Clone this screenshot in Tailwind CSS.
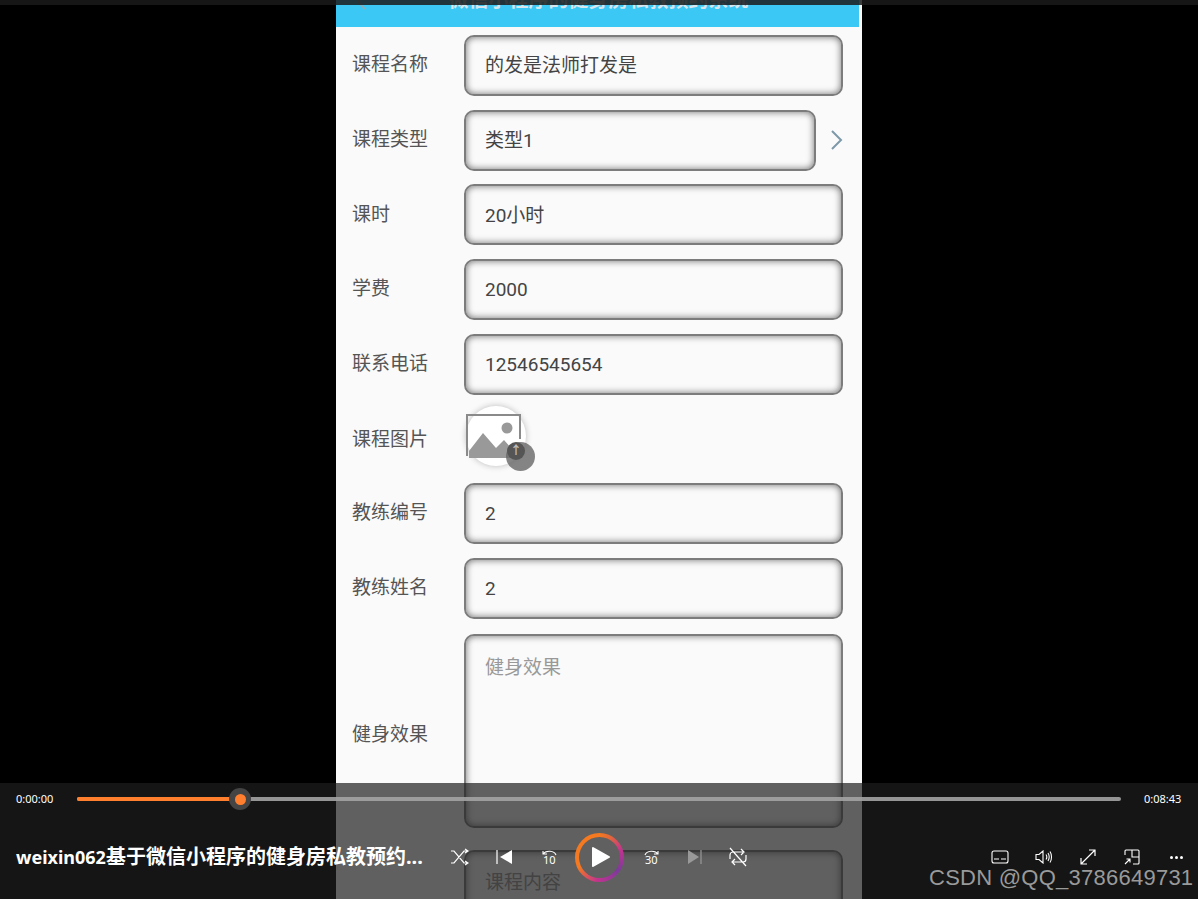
<!DOCTYPE html>
<html lang="zh">
<head>
  <meta charset="UTF-8">
  <title>weixin062</title>
  <script src="https://cdn.jsdelivr.net/npm/@tailwindcss/browser@4"></script>
</head>
<body class="bg-black w-[1198px] h-[899px] overflow-hidden relative font-['Roboto','Noto_Sans_CJK_SC',sans-serif]">

  <!-- top strip -->
  <div class="absolute top-0 left-0 w-full h-[5px] bg-[rgba(26,26,26,0.85)] z-10"></div>

  <!-- phone page -->
  <main class="w-[526px] h-[899px] ml-[336px] bg-[#fafafa] overflow-hidden text-[19px] text-[#555]">
    <header class="h-[27px] w-[523px] bg-[#3cc8f5] overflow-hidden relative">
      <svg class="absolute left-[20px] top-0" width="12" height="10" viewBox="0 0 12 10" fill="none" stroke="#9aa9ae" stroke-width="1.500"><path d="M6 -3L2 2l7 7"/></svg>
      <div class="mt-[-14px] pl-[2px] text-center text-[20px] leading-[28px] font-bold text-[#d5e6ee]">微信小程序的健身房私教预约系统</div>
    </header>

    <div class="pt-[8px] pl-[16px] pr-[19px] flex flex-col gap-[13.7px]">
      <div class="flex items-center h-[61px]">
        <label class="w-[112px]">课程名称</label>
        <div class="flex-1 h-full rounded-[10px] border-2 border-[#7c7c7c] shadow-[inset_0_0_7px_#6e6e6e] pl-[19px] pt-[2px] flex items-center text-[#444]">的发是法师打发是</div>
      </div>
      <div class="flex items-center h-[61px]">
        <label class="w-[112px]">课程类型</label>
        <div class="w-[352px] h-full rounded-[10px] border-2 border-[#7c7c7c] shadow-[inset_0_0_7px_#6e6e6e] pl-[19px] pt-[2px] flex items-center text-[#444]">类型1</div>
        <svg class="ml-[14px]" width="13" height="20" viewBox="0 0 13 20" fill="none" stroke="#7d98a8" stroke-width="2"><path d="M2 1l9 9-9 9"/></svg>
      </div>
      <div class="flex items-center h-[61px]">
        <label class="w-[112px]">课时</label>
        <div class="flex-1 h-full rounded-[10px] border-2 border-[#7c7c7c] shadow-[inset_0_0_7px_#6e6e6e] pl-[19px] pt-[2px] flex items-center text-[#444]">20小时</div>
      </div>
      <div class="flex items-center h-[61px]">
        <label class="w-[112px]">学费</label>
        <div class="flex-1 h-full rounded-[10px] border-2 border-[#7c7c7c] shadow-[inset_0_0_7px_#6e6e6e] pl-[19px] pt-[2px] flex items-center text-[#444]">2000</div>
      </div>
      <div class="flex items-center h-[61px]">
        <label class="w-[112px]">联系电话</label>
        <div class="flex-1 h-full rounded-[10px] border-2 border-[#7c7c7c] shadow-[inset_0_0_7px_#6e6e6e] pl-[19px] pt-[2px] flex items-center text-[#444]">12546545654</div>
      </div>
      <div class="flex items-center h-[60px] -mt-[2px]">
        <label class="w-[114px] mt-[8px]">课程图片</label>
        <div class="relative w-[60px] h-[60px] rounded-full bg-white shadow-[0_0_6px_#bbb]">
          <svg class="absolute left-0 top-[6px]" width="56" height="46" viewBox="0 0 56 46">
            <path d="M1 44V3h53v24" fill="none" stroke="#8a8a8a" stroke-width="2"/>
            <circle cx="41" cy="16" r="5.500" fill="#999"/>
            <path d="M3 46v-7l14-18 13 15 8-8 16 18z" fill="#999"/>
          </svg>
          <div class="absolute left-[40px] top-[36px] w-[29px] h-[29px] rounded-full bg-[#666]/80 flex items-center justify-center">
            <div class="w-[18px] h-[18px] -ml-[9px] -mt-[11px] rounded-full bg-[#555] text-[12px] leading-[18px] text-center font-bold text-[#bbb]">↑</div>
          </div>
        </div>
      </div>
      <div class="flex items-center h-[61px] mt-[3px]">
        <label class="w-[112px]">教练编号</label>
        <div class="flex-1 h-full rounded-[10px] border-2 border-[#7c7c7c] shadow-[inset_0_0_7px_#6e6e6e] pl-[19px] pt-[2px] flex items-center text-[#444]">2</div>
      </div>
      <div class="flex items-center h-[61px]">
        <label class="w-[112px]">教练姓名</label>
        <div class="flex-1 h-full rounded-[10px] border-2 border-[#7c7c7c] shadow-[inset_0_0_7px_#6e6e6e] pl-[19px] pt-[2px] flex items-center text-[#444]">2</div>
      </div>
      <div class="flex items-center h-[194px] mt-[1px]">
        <label class="w-[112px] mt-[10px]">健身效果</label>
        <div class="flex-1 h-full rounded-[10px] border-2 border-[#7c7c7c] shadow-[inset_0_0_7px_#6e6e6e] pl-[19px] pt-[18px] text-[#999]">健身效果</div>
      </div>
      <div class="flex h-[100px] mt-[9px]">
        <div class="w-[112px]"></div>
        <div class="flex-1 h-full rounded-[10px] border-2 border-[#7c7c7c] shadow-[inset_0_0_7px_#6e6e6e] pl-[19px] pt-[17px] text-[#999]">课程内容</div>
      </div>
    </div>
  </main>

  <!-- player overlay -->
  <section class="absolute left-0 bottom-0 w-full h-[116px] bg-[rgba(30,30,30,0.7)] text-white font-['Noto_Sans','Noto_Sans_CJK_SC',sans-serif]">
    <div class="flex items-center h-[32px] pl-[16px]">
      <span class="w-[61px] text-[11px]">0:00:00</span>
      <div class="w-[1044px] h-[4px] rounded-full bg-[#a3a3a3]/90 relative">
        <div class="h-full w-[163px] rounded-full bg-[#ff7f2f]"></div>
        <div class="absolute left-[152px] top-[-9px] w-[22px] h-[22px] rounded-full bg-[#444] flex items-center justify-center">
          <div class="w-[11px] h-[11px] rounded-full bg-[#ff7f2f]"></div>
        </div>
      </div>
      <span class="ml-[23px] text-[11px]">0:08:43</span>
    </div>

    <div class="flex items-center h-[84px] pl-[16px] relative">
      <div class="text-[20px] font-bold whitespace-nowrap"><span class="text-[18px]">weixin062</span>基于微信小程序的健身房私教预约<span class="text-[20px]">...</span></div>

      <!-- transport controls -->
      <div class="absolute left-[451px] top-[16px] flex items-center h-[52px]">
        <svg width="18" height="18" viewBox="0 0 18 18" fill="none" stroke="#fff" stroke-width="1.200"><path d="M0 3h3l10 12h4M0 15h3l10-12h4M14 1l3 2-3 2M14 13l3 2-3 2"/></svg>
        <svg class="ml-[27px]" width="17" height="16" viewBox="0 0 17 16"><path d="M1 1v14" stroke="#fff" stroke-width="1.200"/><path d="M16 1v14L4 8z" fill="#fff"/></svg>
        <svg class="ml-[27px]" width="18" height="22" viewBox="0 0 18 22" fill="none" stroke="#fff" stroke-width="1.100"><path d="M3 8a7 5 0 0 1 13 1M3 5v3h4"/><text x="3" y="18" font-size="11" fill="#fff" stroke="none" font-family="Noto Sans">10</text></svg>
        <div class="ml-[17px] w-[49px] h-[49px] rounded-full bg-[conic-gradient(#f47920_0deg,#e0653c_30deg,#c2338f_70deg,#7c3a9c_125deg,#c2338f_185deg,#f47920_245deg,#f47920_360deg)] flex items-center justify-center">
          <div class="w-[41px] h-[41px] rounded-full bg-[#606060] flex items-center justify-center">
            <svg class="ml-[2px]" width="20" height="22" viewBox="0 0 20 22"><path d="M2 2l16 9-16 9z" fill="#fff" stroke="#fff" stroke-width="2" stroke-linejoin="round"/></svg>
          </div>
        </div>
        <svg class="ml-[19px]" width="18" height="22" viewBox="0 0 18 22" fill="none" stroke="#fff" stroke-width="1.100"><path d="M15 8a7 5 0 0 0-13 1M15 5v3h-4"/><text x="2" y="18" font-size="11" fill="#fff" stroke="none" font-family="Noto Sans">30</text></svg>
        <svg class="ml-[26px]" width="15" height="16" viewBox="0 0 15 16"><path d="M14 1v14" stroke="#999" stroke-width="1.200"/><path d="M1 1v14l11-7z" fill="#999"/></svg>
        <svg class="ml-[27px]" width="18" height="20" viewBox="0 0 18 20" fill="none" stroke="#fff" stroke-width="1.200"><path d="M1 12V8a3 3 0 0 1 3-3h10M12 2l3 3-3 3M17 8v4a3 3 0 0 1-3 3H4M6 12l-3 3 3 3M1 1l16 18"/></svg>
      </div>

      <!-- right controls -->
      <div class="absolute left-[991px] top-[32px] flex items-center h-[20px]">
        <svg width="18" height="14" viewBox="0 0 18 14" fill="none" stroke="#fff" stroke-width="1.100"><rect x="1" y="1" width="16" height="12" rx="2"/><path d="M3 9h5M10 9h5"/></svg>
        <svg class="ml-[26px]" width="18" height="14" viewBox="0 0 18 14" fill="none" stroke="#fff" stroke-width="1.100"><path d="M1 4.500h3L8 1v12L4 9.500H1zM11 4.500c1 1.500 1 3.500 0 5M13 3c1.500 2.500 1.500 5.500 0 8M15 1.500c2 3 2 8 0 11"/></svg>
        <svg class="ml-[27px]" width="16" height="16" viewBox="0 0 16 16" fill="none" stroke="#fff" stroke-width="1.200"><path d="M1 15L15 1M9 1h6v6M1 9v6h6"/></svg>
        <svg class="ml-[28px]" width="16" height="16" viewBox="0 0 16 16" fill="none" stroke="#fff" stroke-width="1.100"><path d="M1 6V2a1 1 0 0 1 1-1h12a1 1 0 0 1 1 1v12a1 1 0 0 1-1 1H9M8 1v7h7M1 15l5-5M2.500 10H6v3.500"/></svg>
        <div class="ml-[30px] flex gap-[2px]">
          <span class="w-[3px] h-[3px] bg-white rounded-full"></span>
          <span class="w-[3px] h-[3px] bg-white rounded-full"></span>
          <span class="w-[3px] h-[3px] bg-white rounded-full"></span>
        </div>
      </div>
    </div>
  </section>

  <!-- watermark -->
  <div class="absolute left-[929px] top-[864px] text-[22px] leading-[28px] text-[#9a9a9a] font-['Liberation_Sans',sans-serif] tracking-[0.25px] z-20">CSDN @QQ_3786649731</div>
</body>
</html>
